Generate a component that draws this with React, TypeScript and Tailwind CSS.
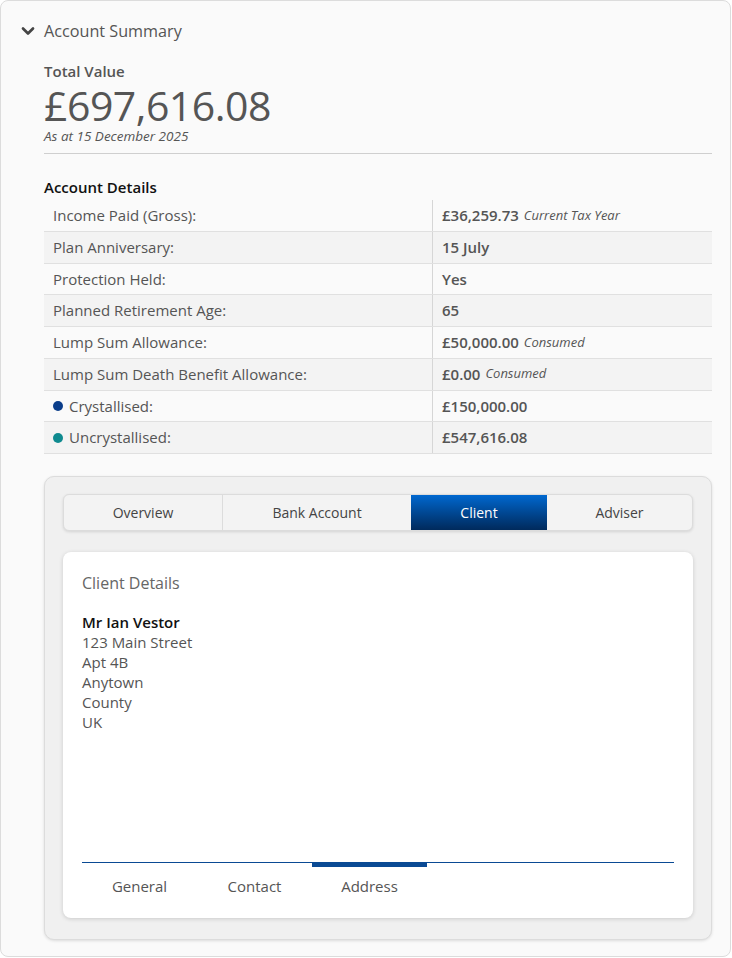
import { ChevronDown } from "lucide-react";

type Row = { label: string; value: string; note?: string; dot?: string };

const rows: Row[] = [
  { label: "Income Paid (Gross):", value: "£36,259.73", note: "Current Tax Year" },
  { label: "Plan Anniversary:", value: "15 July" },
  { label: "Protection Held:", value: "Yes" },
  { label: "Planned Retirement Age:", value: "65" },
  { label: "Lump Sum Allowance:", value: "£50,000.00", note: "Consumed" },
  { label: "Lump Sum Death Benefit Allowance:", value: "£0.00", note: "Consumed" },
  { label: "Crystallised:", value: "£150,000.00", dot: "bg-[#0a3d8a]" },
  { label: "Uncrystallised:", value: "£547,616.08", dot: "bg-[#0f8a8f]" },
];

const tabs = [
  { name: "Overview", w: "w-[159px]" },
  { name: "Bank Account", w: "w-[188px]" },
  { name: "Client", w: "w-[136px]", active: true },
  { name: "Adviser", w: "flex-1" },
];

const subTabs = ["General", "Contact", "Address"];

export default function App() {
  return (
    <div className="min-h-[958px] bg-white font-['Open_Sans',sans-serif]">
      <div className="mr-[1px] min-h-[957px] rounded-lg border border-[#dcdcdc] bg-[#fafafa] pb-[15px]">
        {/* header */}
        <div className="mt-[18px] flex h-[24px] items-center gap-[6px] pl-[17px]">
          <ChevronDown className="h-[20px] w-[20px] text-[#444]" strokeWidth={3.2} />
          <span className="text-[16.2px] leading-[24px] text-[#555]">Account Summary</span>
        </div>

        <div className="ml-[43px] mr-[18px]">
          <div className="mt-[18px] text-[15px] font-semibold leading-[20px] text-[#555]">Total Value</div>
          <div className="mt-[5px] text-[41px] leading-[38px] tracking-[-0.5px] text-[#555]">£697,616.08</div>
          <div className="mt-[4px] text-[13.5px] italic leading-[16px] text-[#555]">As at 15 December 2025</div>
          <div className="mt-[9px] border-t border-[#cfcfcf]" />

          <div className="mt-[23px] text-[15px] font-semibold leading-[20px] text-[#111]">Account Details</div>
          <div className="mt-[3px]">
            {rows.map((r, i) => (
              <div
                key={r.label}
                className={`flex h-[31.75px] border-b border-[#e0e0e0] ${i % 2 === 1 ? "bg-[#f3f3f3]" : "bg-[#fafafa]"}`}
              >
                <div className="flex w-[389px] items-center gap-[6px] border-r border-[#d6d6d6] pl-[9px] text-[15px] text-[#555]">
                  {r.dot && <span className={`h-[10px] w-[10px] rounded-full ${r.dot}`} />}
                  {r.label}
                </div>
                <div className="flex items-center pl-[9px] text-[15px] font-semibold text-[#555]">
                  {r.value}
                  {r.note && <span className="ml-[5px] text-[13px] font-normal italic text-[#555]">{r.note}</span>}
                </div>
              </div>
            ))}
          </div>

          {/* tab panel */}
          <div className="mt-[22px] rounded-[10px] border border-[#dcdcdc] bg-[#f0f0f0] px-[18px] pb-[21px] pt-[17px] shadow-[0_1px_3px_rgba(0,0,0,0.12)]">
            <div className="flex h-[37px] overflow-hidden rounded-[6px] border border-[#dcdcdc] bg-[#f3f3f3] shadow-[0_1px_3px_rgba(0,0,0,0.12)]">
              {tabs.map((t, i) => (
                <div
                  key={t.name}
                  className={`flex items-center justify-center text-[14px] font-medium ${t.w} ${
                    t.active
                      ? "bg-gradient-to-b from-[#0068d0] to-[#002a5c] text-white"
                      : "text-[#444]"
                  } ${i === 0 ? "border-r border-[#dcdcdc]" : ""}`}
                >
                  {t.name}
                </div>
              ))}
            </div>

            <div className="mt-[21px] h-[366px] rounded-[8px] bg-white px-[19px] pt-[20px] shadow-[0_1px_4px_rgba(0,0,0,0.16)]">
              <div className="text-[16px] leading-[22px] text-[#666]">Client Details</div>
              <div className="mt-[18px] text-[15px] font-semibold leading-[20px] text-[#111]">Mr Ian Vestor</div>
              <div className="text-[15px] leading-[20px] text-[#555]">
                <div>123 Main Street</div>
                <div>Apt 4B</div>
                <div>Anytown</div>
                <div>County</div>
                <div>UK</div>
              </div>

              <div className="mt-[130px] border-t border-[#0a4a94]">
                <div className="flex">
                  {subTabs.map((s) => (
                    <div key={s} className="flex w-[115px] flex-col items-center">
                      <div className={`h-[4px] w-full ${s === "Address" ? "bg-[#0a4a94]" : ""}`} />
                      <div className="mt-[9px] text-[15px] leading-[20px] text-[#555]">{s}</div>
                    </div>
                  ))}
                </div>
              </div>
            </div>
          </div>
        </div>
      </div>
    </div>
  );
}
